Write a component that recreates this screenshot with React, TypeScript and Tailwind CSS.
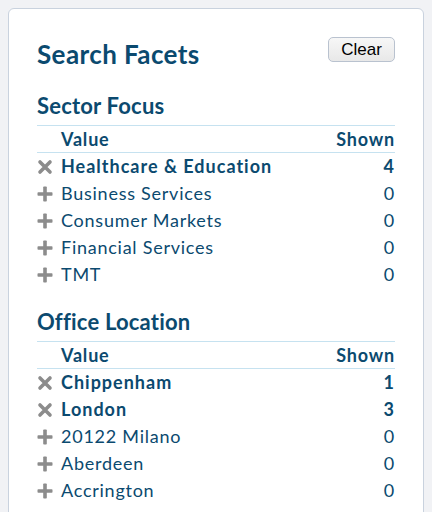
import React from 'react';

type Facet = { label: string; count: number; selected: boolean };

const SECTIONS: { title: string; items: Facet[] }[] = [
  {
    title: 'Sector Focus',
    items: [
      { label: 'Healthcare & Education', count: 4, selected: true },
      { label: 'Business Services', count: 0, selected: false },
      { label: 'Consumer Markets', count: 0, selected: false },
      { label: 'Financial Services', count: 0, selected: false },
      { label: 'TMT', count: 0, selected: false },
    ],
  },
  {
    title: 'Office Location',
    items: [
      { label: 'Chippenham', count: 1, selected: true },
      { label: 'London', count: 3, selected: true },
      { label: '20122 Milano', count: 0, selected: false },
      { label: 'Aberdeen', count: 0, selected: false },
      { label: 'Accrington', count: 0, selected: false },
    ],
  },
];

function RemoveIcon() {
  return (
    <svg width="16" height="16" viewBox="0 0 16 16" className="block">
      <path d="M3 3 L13 13 M13 3 L3 13" stroke="#8c8c8c" strokeWidth="3.6" strokeLinecap="round" />
    </svg>
  );
}

function AddIcon() {
  return (
    <svg width="16" height="16" viewBox="0 0 16 16" className="block">
      <rect x="0.5" y="6.2" width="15" height="3.6" rx="0.8" fill="#8c8c8c" />
      <rect x="6.2" y="0.5" width="3.6" height="15" rx="0.8" fill="#8c8c8c" />
    </svg>
  );
}

function FacetSection({ title, items, first }: { title: string; items: Facet[]; first?: boolean }) {
  return (
    <div className={first ? 'mt-[21px]' : 'mt-[20px]'}>
      <h2 className="text-[22px] leading-[28px] font-bold tracking-[0.2px]">{title}</h2>
      <div className="mt-[5px] border-t border-[#c6e2f0]">
        <div className="flex justify-between items-center h-[27px] border-b border-[#c6e2f0] pl-[24px] font-bold text-[18px] tracking-[0.8px]">
          <span>Value</span>
          <span>Shown</span>
        </div>
        {items.map(it => (
          <div
            key={it.label}
            className={`flex items-center h-[27px] text-[18px] ${it.selected ? 'font-bold tracking-[1px]' : 'tracking-[0.75px]'}`}
          >
            <span className="w-[24px] flex items-center">{it.selected ? <RemoveIcon /> : <AddIcon />}</span>
            <span className="flex-1">{it.label}</span>
            <span>{it.count}</span>
          </div>
        ))}
      </div>
    </div>
  );
}

export default function App() {
  return (
    <div className="min-h-screen bg-[#f1f2f5] pt-2 px-2 overflow-hidden" style={{ height: 512 }}>
      <div
        className="w-[416px] bg-white border border-[#c9d2de] rounded-[6px] px-[28px] pt-[28px] pb-8 text-[#0b4a6f]"
        style={{ fontFamily: 'Lato, "Open Sans", sans-serif' }}
      >
        <div className="flex justify-between items-start">
          <h1 className="text-[26px] leading-[34px] font-bold tracking-[0.4px]">Search Facets</h1>
          <button
            className="h-[25px] w-[67px] rounded-[5px] border border-[#b9c2cf] bg-gradient-to-b from-[#f7f7f7] to-[#e8e8e8] text-black text-[17px] leading-none"
            style={{ fontFamily: '"Liberation Sans", Arial, sans-serif' }}
          >
            Clear
          </button>
        </div>
        {SECTIONS.map((s, i) => (
          <FacetSection key={s.title} title={s.title} items={s.items} first={i === 0} />
        ))}
      </div>
    </div>
  );
}
